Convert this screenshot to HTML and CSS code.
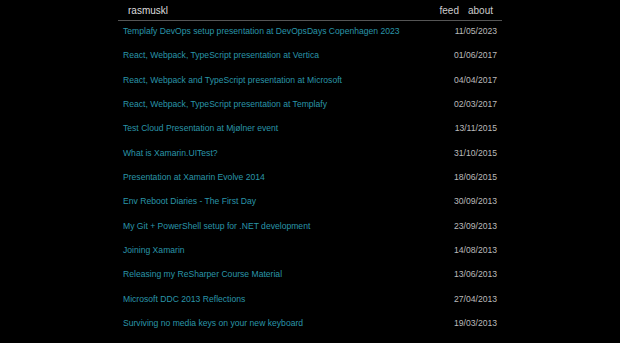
FILE: index.html
```html
<!DOCTYPE html>
<html lang="en">
<head>
    <meta charset="UTF-8">
    <meta name="viewport" content="width=device-width, initial-scale=1.0">
    <title>rasmuskl</title>
    <link rel="stylesheet" href="styles.css">
</head>
<body>
    <div class="container">
        <header class="header">
            <a class="brand" href="#">rasmuskl</a>
            <nav class="nav">
                <a href="#">feed</a>
                <a href="#">about</a>
            </nav>
        </header>

        <ul class="posts">
            <li><a href="#">Templafy DevOps setup presentation at DevOpsDays Copenhagen 2023</a><span class="date">11/05/2023</span></li>
            <li><a href="#">React, Webpack, TypeScript presentation at Vertica</a><span class="date">01/06/2017</span></li>
            <li><a href="#">React, Webpack and TypeScript presentation at Microsoft</a><span class="date">04/04/2017</span></li>
            <li><a href="#">React, Webpack, TypeScript presentation at Templafy</a><span class="date">02/03/2017</span></li>
            <li><a href="#">Test Cloud Presentation at Mjølner event</a><span class="date">13/11/2015</span></li>
            <li><a href="#">What is Xamarin.UITest?</a><span class="date">31/10/2015</span></li>
            <li><a href="#">Presentation at Xamarin Evolve 2014</a><span class="date">18/06/2015</span></li>
            <li><a href="#">Env Reboot Diaries - The First Day</a><span class="date">30/09/2013</span></li>
            <li><a href="#">My Git + PowerShell setup for .NET development</a><span class="date">23/09/2013</span></li>
            <li><a href="#">Joining Xamarin</a><span class="date">14/08/2013</span></li>
            <li><a href="#">Releasing my ReSharper Course Material</a><span class="date">13/06/2013</span></li>
            <li><a href="#">Microsoft DDC 2013 Reflections</a><span class="date">27/04/2013</span></li>
            <li><a href="#">Surviving no media keys on your new keyboard</a><span class="date">19/03/2013</span></li>
        </ul>
    </div>
</body>
</html>
```

FILE: styles.css
```css
* {
    margin: 0;
    padding: 0;
    box-sizing: border-box;
}

body {
    font-family: 'Liberation Sans', Arial, sans-serif;
    background: #000;
    color: #ccc;
}

a {
    text-decoration: none;
}

.container {
    width: 384px;
    margin: 0 auto;
}

.header {
    display: flex;
    justify-content: space-between;
    align-items: center;
    height: 21px;
    padding: 1px 9px 0 10px;
    border-bottom: 1px solid #555;
    font-size: 10px;
}

.brand {
    color: #ddd;
}

.nav {
    display: flex;
    gap: 9px;
}

.nav a {
    color: #ccc;
}

.posts {
    list-style: none;
    font-size: 8.6px;
    padding-top: 2px;
}

.posts li {
    display: flex;
    justify-content: space-between;
    line-height: 12px;
    padding: 2px 5px 10.33px;
}

.posts a {
    color: #2a95a8;
}

.date {
    color: #bbb;
}
```
